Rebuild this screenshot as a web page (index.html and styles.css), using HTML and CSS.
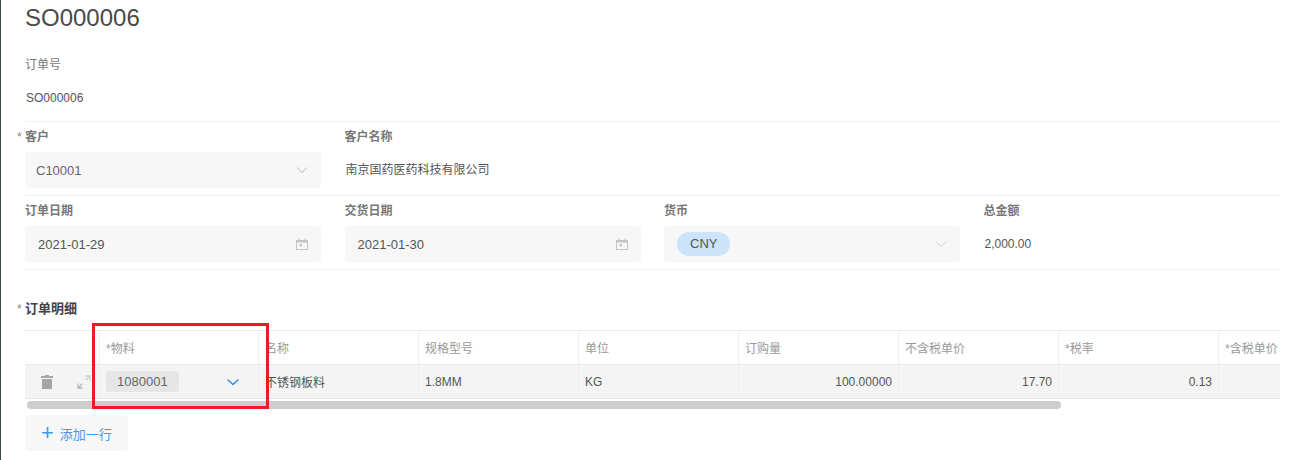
FILE: index.html
```html
<!DOCTYPE html>
<html lang="en">
<head>
    <meta charset="UTF-8">
    <title>SO000006</title>
    <link rel="stylesheet" href="styles.css">
</head>
<body>
    <div class="edge"></div>
    <div class="page">
        <h1 class="title">SO000006</h1>

        <div class="form-row row-order">
            <div class="field">
                <label>订单号</label>
                <div class="value">SO000006</div>
            </div>
        </div>

        <div class="form-row">
            <div class="field">
                <label class="required">客户</label>
                <div class="select">
                    <span class="select-text">C10001</span>
                    <svg class="chevron" width="12" height="12" viewBox="0 0 12 12"><path d="M1 3.5 L6 8.5 L11 3.5" fill="none" stroke="#b5b5b5" stroke-width="1"/></svg>
                </div>
            </div>
            <div class="field">
                <label>客户名称</label>
                <div class="value">南京国药医药科技有限公司</div>
            </div>
        </div>

        <div class="form-row">
            <div class="field">
                <label>订单日期</label>
                <div class="select">
                    <span class="date-text">2021-01-29</span>
                    <svg class="cal" width="12" height="12" viewBox="0 0 12 12"><path d="M0 2 H2.5 V0.5 H3.5 V2 H8.5 V0.5 H9.5 V2 H12 V12 H0 Z M1 4.5 V11 H11 V4.5 Z M3.5 6 H6 V8.5 H3.5 Z" fill="#c4c4c4" fill-rule="evenodd"/></svg>
                </div>
            </div>
            <div class="field">
                <label>交货日期</label>
                <div class="select">
                    <span class="date-text">2021-01-30</span>
                    <svg class="cal" width="12" height="12" viewBox="0 0 12 12"><path d="M0 2 H2.5 V0.5 H3.5 V2 H8.5 V0.5 H9.5 V2 H12 V12 H0 Z M1 4.5 V11 H11 V4.5 Z M3.5 6 H6 V8.5 H3.5 Z" fill="#c4c4c4" fill-rule="evenodd"/></svg>
                </div>
            </div>
            <div class="field">
                <label>货币</label>
                <div class="select">
                    <span class="pill">CNY</span>
                    <svg class="chevron" width="12" height="12" viewBox="0 0 12 12"><path d="M1 3.5 L6 8.5 L11 3.5" fill="none" stroke="#cfcfcf" stroke-width="1"/></svg>
                </div>
            </div>
            <div class="field">
                <label>总金额</label>
                <div class="value">2,000.00</div>
            </div>
        </div>

        <h2 class="section required">订单明细</h2>

        <div class="grid">
            <div class="grid-head">
                <div class="cell cell-tools"></div>
                <div class="cell cell-item">*物料</div>
                <div class="cell">名称</div>
                <div class="cell">规格型号</div>
                <div class="cell">单位</div>
                <div class="cell">订购量</div>
                <div class="cell">不含税单价</div>
                <div class="cell">*税率</div>
                <div class="cell">*含税单价</div>
            </div>
            <div class="grid-row">
                <div class="cell cell-tools">
                    <svg width="12" height="14" viewBox="0 0 12 14"><path d="M4 0 H8 V1 H12 V3 H0 V1 H4 Z M1 4 H11 V14 H1 Z" fill="#a6a6a6"/></svg>
                    <svg width="14" height="14" viewBox="0 0 14 14"><path d="M8.5 1 H13 V5.5 M13 1 L9 5" fill="none" stroke="#d0d0d0" stroke-width="1.3"/><path d="M5.5 13 H1 V8.5 M1 13 L5 9" fill="none" stroke="#b8b8b8" stroke-width="1.3"/></svg>
                </div>
                <div class="cell cell-item">
                    <span class="tag">1080001</span>
                    <svg width="12" height="12" viewBox="0 0 12 12"><path d="M0.5 3.5 L6 8.5 L11.5 3.5" fill="none" stroke="#2d8fe6" stroke-width="1.5"/></svg>
                </div>
                <div class="cell">不锈钢板料</div>
                <div class="cell">1.8MM</div>
                <div class="cell">KG</div>
                <div class="cell num">100.00000</div>
                <div class="cell num">17.70</div>
                <div class="cell num">0.13</div>
                <div class="cell num"></div>
            </div>
            <div class="hscroll"><div class="hscroll-thumb"></div></div>
        </div>

        <button class="add-row"><span class="plus">+</span>添加一行</button>
    </div>
    <div class="highlight"></div>
</body>
</html>
```

FILE: styles.css
```css
html, body {
    margin: 0;
    padding: 0;
    height: 460px;
    overflow: hidden;
    background: #fff;
    font-family: "Liberation Sans", "Noto Sans CJK SC", sans-serif;
    color: #555;
}
body {
    display: flex;
}
.edge {
    width: 1px;
    background: #3c4a4c;
    flex-shrink: 0;
}
.page {
    flex: 1;
    min-width: 0;
    padding: 0 12px 0 24px;
    overflow: hidden;
}
.title {
    margin: 0;
    height: 36px;
    line-height: 36px;
    font-size: 24px;
    font-weight: normal;
    color: #4a4a4a;
}
.form-row {
    display: flex;
    height: 73px;
    border-bottom: 1px solid #f0f0f0;
}
.row-order {
    height: 85px;
    padding-top: 0;
}
.row-order .field {
    padding-top: 19px;
}
.field {
    width: 296px;
    margin-right: 23.5px;
    flex-shrink: 0;
}
label {
    display: block;
    height: 30px;
    line-height: 30px;
    font-size: 12px;
    font-weight: bold;
    color: #777;
}
.row-order label {
    font-weight: normal;
    height: 20px;
    line-height: 20px;
}
.required {
    position: relative;
}
.required::before {
    content: "*";
    position: absolute;
    left: -8px;
    font-size: 12px;
    font-weight: normal;
    color: #888;
}
.value {
    height: 36px;
    line-height: 36px;
    font-size: 12px;
    color: #555;
    padding-left: 1px;
}
.row-order .value {
    margin-top: 5px;
}
.select {
    display: flex;
    justify-content: space-between;
    align-items: center;
    height: 36px;
    padding: 0 13px 0 11px;
    background: #f7f7f7;
    border-radius: 4px;
    font-size: 13px;
    color: #666;
}
.date-text {
    margin-left: 2px;
    font-size: 13px;
    color: #555;
}
.pill {
    display: inline-block;
    height: 24px;
    line-height: 24px;
    padding: 0 13px;
    margin-left: 2px;
    border-radius: 12px;
    background: #cbe4f9;
    color: #555;
}
.section {
    margin: 0;
    padding-top: 28px;
    height: 32px;
    line-height: 22px;
    font-size: 13px;
    color: #444;
    box-sizing: content-box;
}
.section.required::before {
    top: 28px;
}
.grid {
    font-size: 12px;
    color: #555;
}
.grid-head, .grid-row {
    display: flex;
    border-top: 1px solid #ebebeb;
}
.grid-head {
    height: 33px;
    color: #999;
}
.grid-row {
    height: 33px;
    background: #f4f4f4;
    border-bottom: 1px solid #e6e6e6;
}
.cell {
    width: 160px;
    flex-shrink: 0;
    box-sizing: border-box;
    padding: 0 6px 0 6px;
    display: flex;
    align-items: center;
    border-right: 1px solid #eee;
}
.cell-tools {
    width: 74px;
    justify-content: space-between;
    padding: 0 8px 0 16px;
    border-right: 0;
}
.cell-item {
    width: 160px;
    justify-content: space-between;
    padding: 0 19px 0 6px;
    border-left: 1px solid #eee;
}
.grid-row .cell-item svg {
    flex-shrink: 0;
}
.num {
    justify-content: flex-end;
}
.tag {
    padding: 0 11px;
    height: 21px;
    line-height: 21px;
    background: #e6e6e6;
    border-radius: 3px;
    font-size: 13px;
    color: #666;
}
.hscroll {
    height: 8px;
    margin-top: 2px;
    padding-left: 2px;
}
.hscroll-thumb {
    width: 1034px;
    height: 8px;
    border-radius: 4px;
    background: #cdcdcd;
}
.add-row {
    display: flex;
    align-items: center;
    height: 36px;
    margin-top: 6px;
    padding: 0 16px 0 16px;
    border: 0;
    border-radius: 4px;
    background: #f7f7f7;
    color: #3d9be9;
    font-size: 13px;
    font-family: inherit;
}
.plus {
    font-size: 22px;
    margin-right: 6px;
    line-height: 20px;
}
.highlight {
    position: absolute;
    left: 92px;
    top: 323px;
    width: 171px;
    height: 80px;
    border: 3px solid #ed1c24;
}
```
